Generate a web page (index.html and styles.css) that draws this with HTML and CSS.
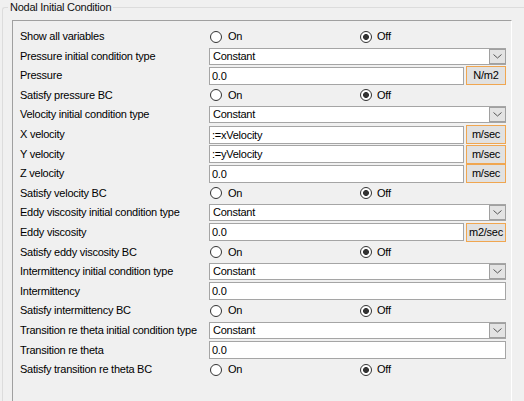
FILE: index.html
```html
<!DOCTYPE html>
<html>
<head>
<meta charset="utf-8">
<link rel="stylesheet" href="styles.css">
</head>
<body>
<fieldset class="group">
  <legend class="group-title">Nodal Initial Condition</legend>
  <div class="panel">
    <span class="label">Show all variables</span>
    <div class="radios"><span class="radio"><span class="circle"></span>On</span><span class="radio on"><span class="circle"></span>Off</span></div>

    <span class="label">Pressure initial condition type</span>
    <div class="select"><span class="select-value">Constant</span><span class="select-btn"><svg width="9" height="5" viewBox="0 0 9 5"><polyline points="0.5,0.5 4.5,4 8.5,0.5" fill="none" stroke="#555" stroke-width="1"/></svg></span></div>

    <span class="label">Pressure</span>
    <div class="with-unit"><div class="field">0.0</div><div class="unit">N/m2</div></div>

    <span class="label">Satisfy pressure BC</span>
    <div class="radios"><span class="radio"><span class="circle"></span>On</span><span class="radio on"><span class="circle"></span>Off</span></div>

    <span class="label">Velocity initial condition type</span>
    <div class="select"><span class="select-value">Constant</span><span class="select-btn"><svg width="9" height="5" viewBox="0 0 9 5"><polyline points="0.5,0.5 4.5,4 8.5,0.5" fill="none" stroke="#555" stroke-width="1"/></svg></span></div>

    <span class="label">X velocity</span>
    <div class="with-unit"><div class="field">:=xVelocity</div><div class="unit">m/sec</div></div>

    <span class="label">Y velocity</span>
    <div class="with-unit"><div class="field">:=yVelocity</div><div class="unit">m/sec</div></div>

    <span class="label">Z velocity</span>
    <div class="with-unit"><div class="field">0.0</div><div class="unit">m/sec</div></div>

    <span class="label">Satisfy velocity BC</span>
    <div class="radios"><span class="radio"><span class="circle"></span>On</span><span class="radio on"><span class="circle"></span>Off</span></div>

    <span class="label">Eddy viscosity initial condition type</span>
    <div class="select"><span class="select-value">Constant</span><span class="select-btn"><svg width="9" height="5" viewBox="0 0 9 5"><polyline points="0.5,0.5 4.5,4 8.5,0.5" fill="none" stroke="#555" stroke-width="1"/></svg></span></div>

    <span class="label">Eddy viscosity</span>
    <div class="with-unit"><div class="field">0.0</div><div class="unit">m2/sec</div></div>

    <span class="label">Satisfy eddy viscosity BC</span>
    <div class="radios"><span class="radio"><span class="circle"></span>On</span><span class="radio on"><span class="circle"></span>Off</span></div>

    <span class="label">Intermittency initial condition type</span>
    <div class="select"><span class="select-value">Constant</span><span class="select-btn"><svg width="9" height="5" viewBox="0 0 9 5"><polyline points="0.5,0.5 4.5,4 8.5,0.5" fill="none" stroke="#555" stroke-width="1"/></svg></span></div>

    <span class="label">Intermittency</span>
    <div class="field">0.0</div>

    <span class="label">Satisfy intermittency BC</span>
    <div class="radios"><span class="radio"><span class="circle"></span>On</span><span class="radio on"><span class="circle"></span>Off</span></div>

    <span class="label">Transition re theta initial condition type</span>
    <div class="select"><span class="select-value">Constant</span><span class="select-btn"><svg width="9" height="5" viewBox="0 0 9 5"><polyline points="0.5,0.5 4.5,4 8.5,0.5" fill="none" stroke="#555" stroke-width="1"/></svg></span></div>

    <span class="label">Transition re theta</span>
    <div class="field">0.0</div>

    <span class="label">Satisfy transition re theta BC</span>
    <div class="radios"><span class="radio"><span class="circle"></span>On</span><span class="radio on"><span class="circle"></span>Off</span></div>
  </div>
</fieldset>
</body>
</html>
```
FILE: styles.css
```css
html, body {
  margin: 0;
  overflow: hidden;
}
body {
  width: 524px;
  height: 401px;
  background: #f0f0f0;
  color: #000;
  font-family: "Liberation Sans", Arial, sans-serif;
  font-size: 11px;
  line-height: 13px;
  letter-spacing: -0.25px;
}
.group {
  margin: 0 0 0 2px;
  padding: 0;
  width: 522px;
  min-width: 0;
  height: 401px;
  box-sizing: border-box;
  border: 1px solid #dcdcdc;
  border-right: none;
  border-bottom: none;
  border-top-left-radius: 3px;
}
.group-title {
  margin-left: 5px;
  padding: 0 2px;
  line-height: 15px;
  color: #111;
}
.panel {
  margin: 5px 0 0 9px;
  width: 500px;
  height: 381px;
  box-sizing: border-box;
  border: 1px solid;
  border-color: #a0a0a0 #ffffff #ffffff #a0a0a0;
  border-bottom: none;
  padding: 5.75px 5px 0 7px;
  display: grid;
  grid-template-columns: 189px 297px;
  grid-auto-rows: 19.6px;
  align-items: center;
  align-content: start;
}
.label {
  white-space: nowrap;
}
.radios {
  display: grid;
  grid-template-columns: 149px 148px;
}
.radio {
  display: flex;
  align-items: center;
  gap: 6px;
  padding-left: 1px;
}
.radio.on {
  gap: 5px;
  padding-left: 2px;
}
.circle {
  width: 12px;
  height: 12px;
  box-sizing: border-box;
  border: 1px solid #333;
  border-radius: 50%;
  background: #fff;
}
.radio.on .circle {
  background: radial-gradient(circle, #333 0 2.6px, #fff 3.3px);
}
.select {
  height: 17px;
  box-sizing: border-box;
  border: 1px solid #a5a5a5;
  background: #fff;
  display: flex;
}
.select-value {
  flex: 1;
  padding-left: 3px;
  line-height: 15px;
}
.select-btn {
  width: 17px;
  margin: 0 -1px 0 0;
  box-sizing: border-box;
  border: 1px solid #a0a0a0;
  background: #e3e3e3;
  display: flex;
  align-items: center;
  justify-content: center;
}
.field {
  height: 18px;
  box-sizing: border-box;
  border: 1px solid #a5a5a5;
  background: #fff;
  padding-left: 2px;
  line-height: 16px;
}
.with-unit {
  display: flex;
  align-items: center;
  gap: 2px;
}
.with-unit .field {
  width: 255px;
}
.unit {
  width: 40px;
  height: 19px;
  box-sizing: border-box;
  border: 1px solid #f0a650;
  background: #e1e1e1;
  text-align: center;
  line-height: 17px;
}
```
